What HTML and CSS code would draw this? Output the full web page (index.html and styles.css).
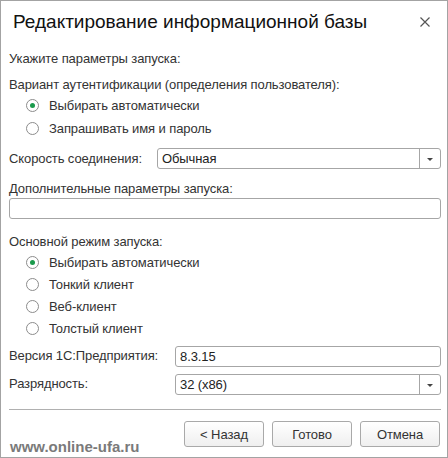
FILE: index.html
```html
<!DOCTYPE html>
<html lang="ru">
<head>
<meta charset="utf-8">
<title>Редактирование информационной базы</title>
<link rel="stylesheet" href="styles.css">
</head>
<body>
<div class="window">
  <div class="header">
    <div class="title">Редактирование информационной базы</div>
    <svg class="close" width="12" height="12" viewBox="0 0 12 12"><path d="M1.5 1.5 L10.5 10.5 M10.5 1.5 L1.5 10.5" stroke="#555" stroke-width="1.2" fill="none"/></svg>
  </div>
  <div class="content">
    <div class="line r1">Укажите параметры запуска:</div>
    <div class="line r2">Вариант аутентификации (определения пользователя):</div>
    <div class="radio auth"><span class="dot on"></span>Выбирать автоматически</div>
    <div class="radio auth"><span class="dot"></span>Запрашивать имя и пароль</div>
    <div class="field-row speed">
      <span class="label speed-label">Скорость соединения:</span>
      <div class="select"><span class="value">Обычная</span><span class="drop"><span class="tri"></span></span></div>
    </div>
    <div class="line r3">Дополнительные параметры запуска:</div>
    <div class="input wide"></div>
    <div class="line r4">Основной режим запуска:</div>
    <div class="radio mode"><span class="dot on"></span>Выбирать автоматически</div>
    <div class="radio mode"><span class="dot"></span>Тонкий клиент</div>
    <div class="radio mode"><span class="dot"></span>Веб-клиент</div>
    <div class="radio mode"><span class="dot"></span>Толстый клиент</div>
    <div class="field-row ver">
      <span class="label ver-label">Версия 1С:Предприятия:</span>
      <div class="input grow"><span class="value">8.3.15</span></div>
    </div>
    <div class="field-row bit">
      <span class="label ver-label">Разрядность:</span>
      <div class="select"><span class="value">32 (x86)</span><span class="drop"><span class="tri"></span></span></div>
    </div>
    <div class="sep"></div>
    <div class="buttons">
      <div class="btn">&lt; Назад</div>
      <div class="btn">Готово</div>
      <div class="btn">Отмена</div>
    </div>
  </div>
  <div class="watermark">www.online-ufa.ru</div>
</div>
</body>
</html>
```
FILE: styles.css
```css
* { box-sizing: border-box; }
html, body { margin: 0; padding: 0; background: #fff; }
body {
  font-family: "Liberation Sans", Arial, sans-serif;
  font-size: 13px;
  letter-spacing: -0.1px;
  color: #333;
}
.window {
  position: relative;
  width: 448px;
  height: 458px;
  border: 1px solid #a3a3a3;
  background: #fff;
  overflow: hidden;
}
.header {
  height: 41px;
  display: flex;
  align-items: center;
  justify-content: space-between;
  padding: 0 16px 0 12px;
}
.title {
  font-size: 19px;
  color: #111;
  letter-spacing: 0;
}
.close { display: block; }
.content {
  padding: 0 6px 0 8px;
  display: flex;
  flex-direction: column;
}
.line {
  height: 20px;
  display: flex;
  align-items: center;
  white-space: nowrap;
}
.r1 { margin-top: 6px; }
.r2 { margin-top: 7px; height: 19px; }
.r3 { margin-top: 9px; }
.r4 { margin-top: 12px; }
.radio {
  display: flex;
  align-items: center;
  padding-left: 17px;
  white-space: nowrap;
}
.radio.auth { height: 23px; }
.radio.mode { height: 22px; }
.dot {
  width: 13px;
  height: 13px;
  border: 1px solid #8c8c8c;
  border-radius: 50%;
  margin-right: 10px;
  display: flex;
  align-items: center;
  justify-content: center;
  background: #fff;
  flex: none;
}
.dot.on::after {
  content: "";
  width: 5px;
  height: 5px;
  border-radius: 50%;
  background: #1b9a4c;
}
.field-row {
  display: flex;
  align-items: center;
  height: 21px;
}
.speed { margin-top: 8px; }
.ver { margin-top: 7px; }
.bit { margin-top: 7px; }
.label { flex: none; white-space: nowrap; }
.speed-label { width: 148px; }
.ver-label { width: 166px; align-self: flex-start; padding-top: 2px; }
.select, .input {
  border: 1px solid #a6a6a6;
  border-radius: 3px;
  height: 21px;
  display: flex;
  align-items: center;
  background: #fff;
}
.select { flex: 1; }
.input.grow { flex: 1; }
.input.wide { height: 21px; }
.value {
  flex: 1;
  padding-left: 4px;
  color: #222;
}
.drop {
  width: 21px;
  height: 100%;
  border-left: 1px solid #a6a6a6;
  display: flex;
  align-items: center;
  justify-content: center;
}
.tri {
  width: 0;
  height: 0;
  border-left: 3px solid transparent;
  border-right: 3px solid transparent;
  border-top: 3px solid #444;
  margin-top: 1px;
}
.sep {
  margin-top: 14px;
  height: 1px;
  background: #b0b0b0;
}
.buttons {
  margin-top: 11px;
  display: flex;
  justify-content: flex-end;
  gap: 8px;
  padding-right: 1px;
}
.btn {
  width: 80px;
  height: 26px;
  border: 1px solid #a9a9a9;
  border-radius: 3px;
  background: linear-gradient(#ffffff, #efefef);
  display: flex;
  align-items: center;
  justify-content: center;
  color: #333;
}
.watermark {
  position: absolute;
  left: 9px;
  bottom: 2px;
  font-weight: bold;
  font-size: 15px;
  letter-spacing: 0;
  color: #7a7a7a;
}
```
